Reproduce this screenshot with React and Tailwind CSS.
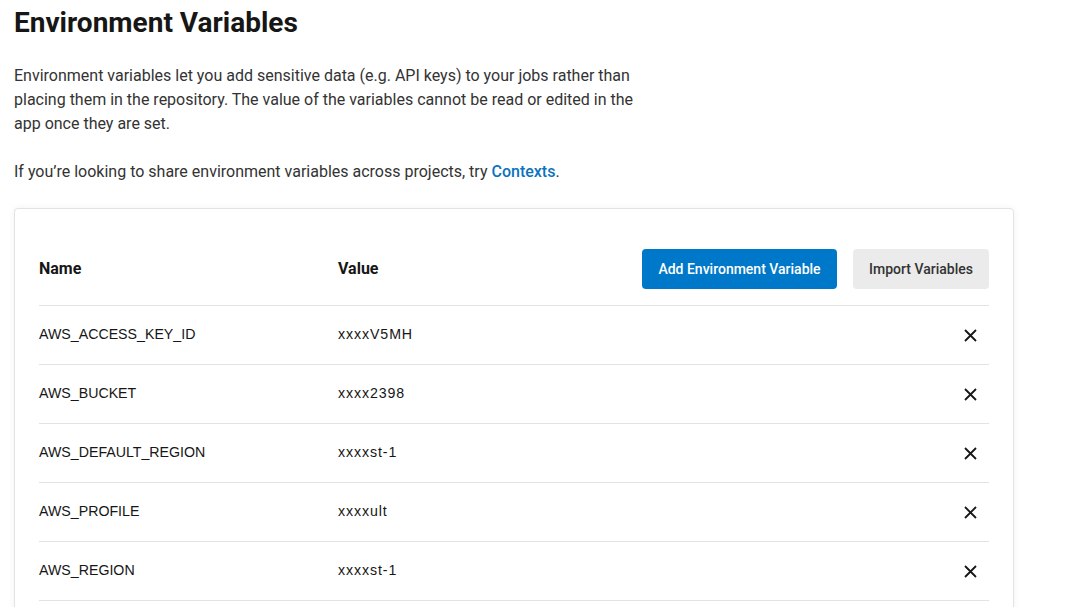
import React from 'react'

const variables = [
  { name: 'AWS_ACCESS_KEY_ID', value: 'xxxxV5MH' },
  { name: 'AWS_BUCKET', value: 'xxxx2398' },
  { name: 'AWS_DEFAULT_REGION', value: 'xxxxst-1' },
  { name: 'AWS_PROFILE', value: 'xxxxult' },
  { name: 'AWS_REGION', value: 'xxxxst-1' },
]

function CloseIcon() {
  return (
    <svg width="13" height="13" viewBox="0 0 13 13" fill="none">
      <path d="M1 1L12 12M12 1L1 12" stroke="#161616" strokeWidth="1.8" />
    </svg>
  )
}

export default function App() {
  return (
    <div className="h-screen overflow-hidden bg-white text-[#161616] font-['Roboto',sans-serif] px-[14px] pt-[6px]">
      <h1 className="text-[28px] font-bold leading-[34px] text-[#161616]">Environment Variables</h1>

      <p className="mt-[24px] w-[625px] text-[16px] leading-[24px] text-[#333]">
        Environment variables let you add sensitive data (e.g. API keys) to your jobs rather than placing them in the repository. The value of the variables cannot be read or edited in the app once they are set.
      </p>
      <p className="mt-[24px] text-[16px] leading-[24px] text-[#333]">
        If you’re looking to share environment variables across projects, try{' '}
        <a className="text-[#0b73bd] font-medium">Contexts</a>.
      </p>

      <div className="mt-[24px] w-[1000px] rounded-[4px] border border-[#e3e3e3] bg-white shadow-[0_0_6px_rgba(0,0,0,0.06)] px-[24px] pt-[40px] pb-[40px]">
        {/* Header row */}
        <div className="flex items-center border-b border-[#e3e3e3] pb-[16px]">
          <div className="w-[299px] text-[16px] font-bold text-[#161616]">Name</div>
          <div className="flex-1 text-[16px] font-bold text-[#161616]">Value</div>
          <button className="h-[40px] w-[195px] rounded-[4px] bg-[#0078c9] text-[14px] font-medium text-white">
            Add Environment Variable
          </button>
          <button className="ml-[16px] h-[40px] w-[136px] rounded-[4px] bg-[#ebebeb] text-[14px] font-medium text-[#333]">
            Import Variables
          </button>
        </div>

        {variables.map((v) => (
          <div
            key={v.name}
            className="flex h-[59px] items-center border-b border-[#e3e3e3] font-['Liberation_Sans',Arial,sans-serif] text-[14.2px] text-[#161616]"
          >
            <div className="w-[299px]">{v.name}</div>
            <div className="flex-1 tracking-[0.9px]">{v.value}</div>
            <div className="pr-[12px]">
              <CloseIcon />
            </div>
          </div>
        ))}
      </div>
    </div>
  )
}
